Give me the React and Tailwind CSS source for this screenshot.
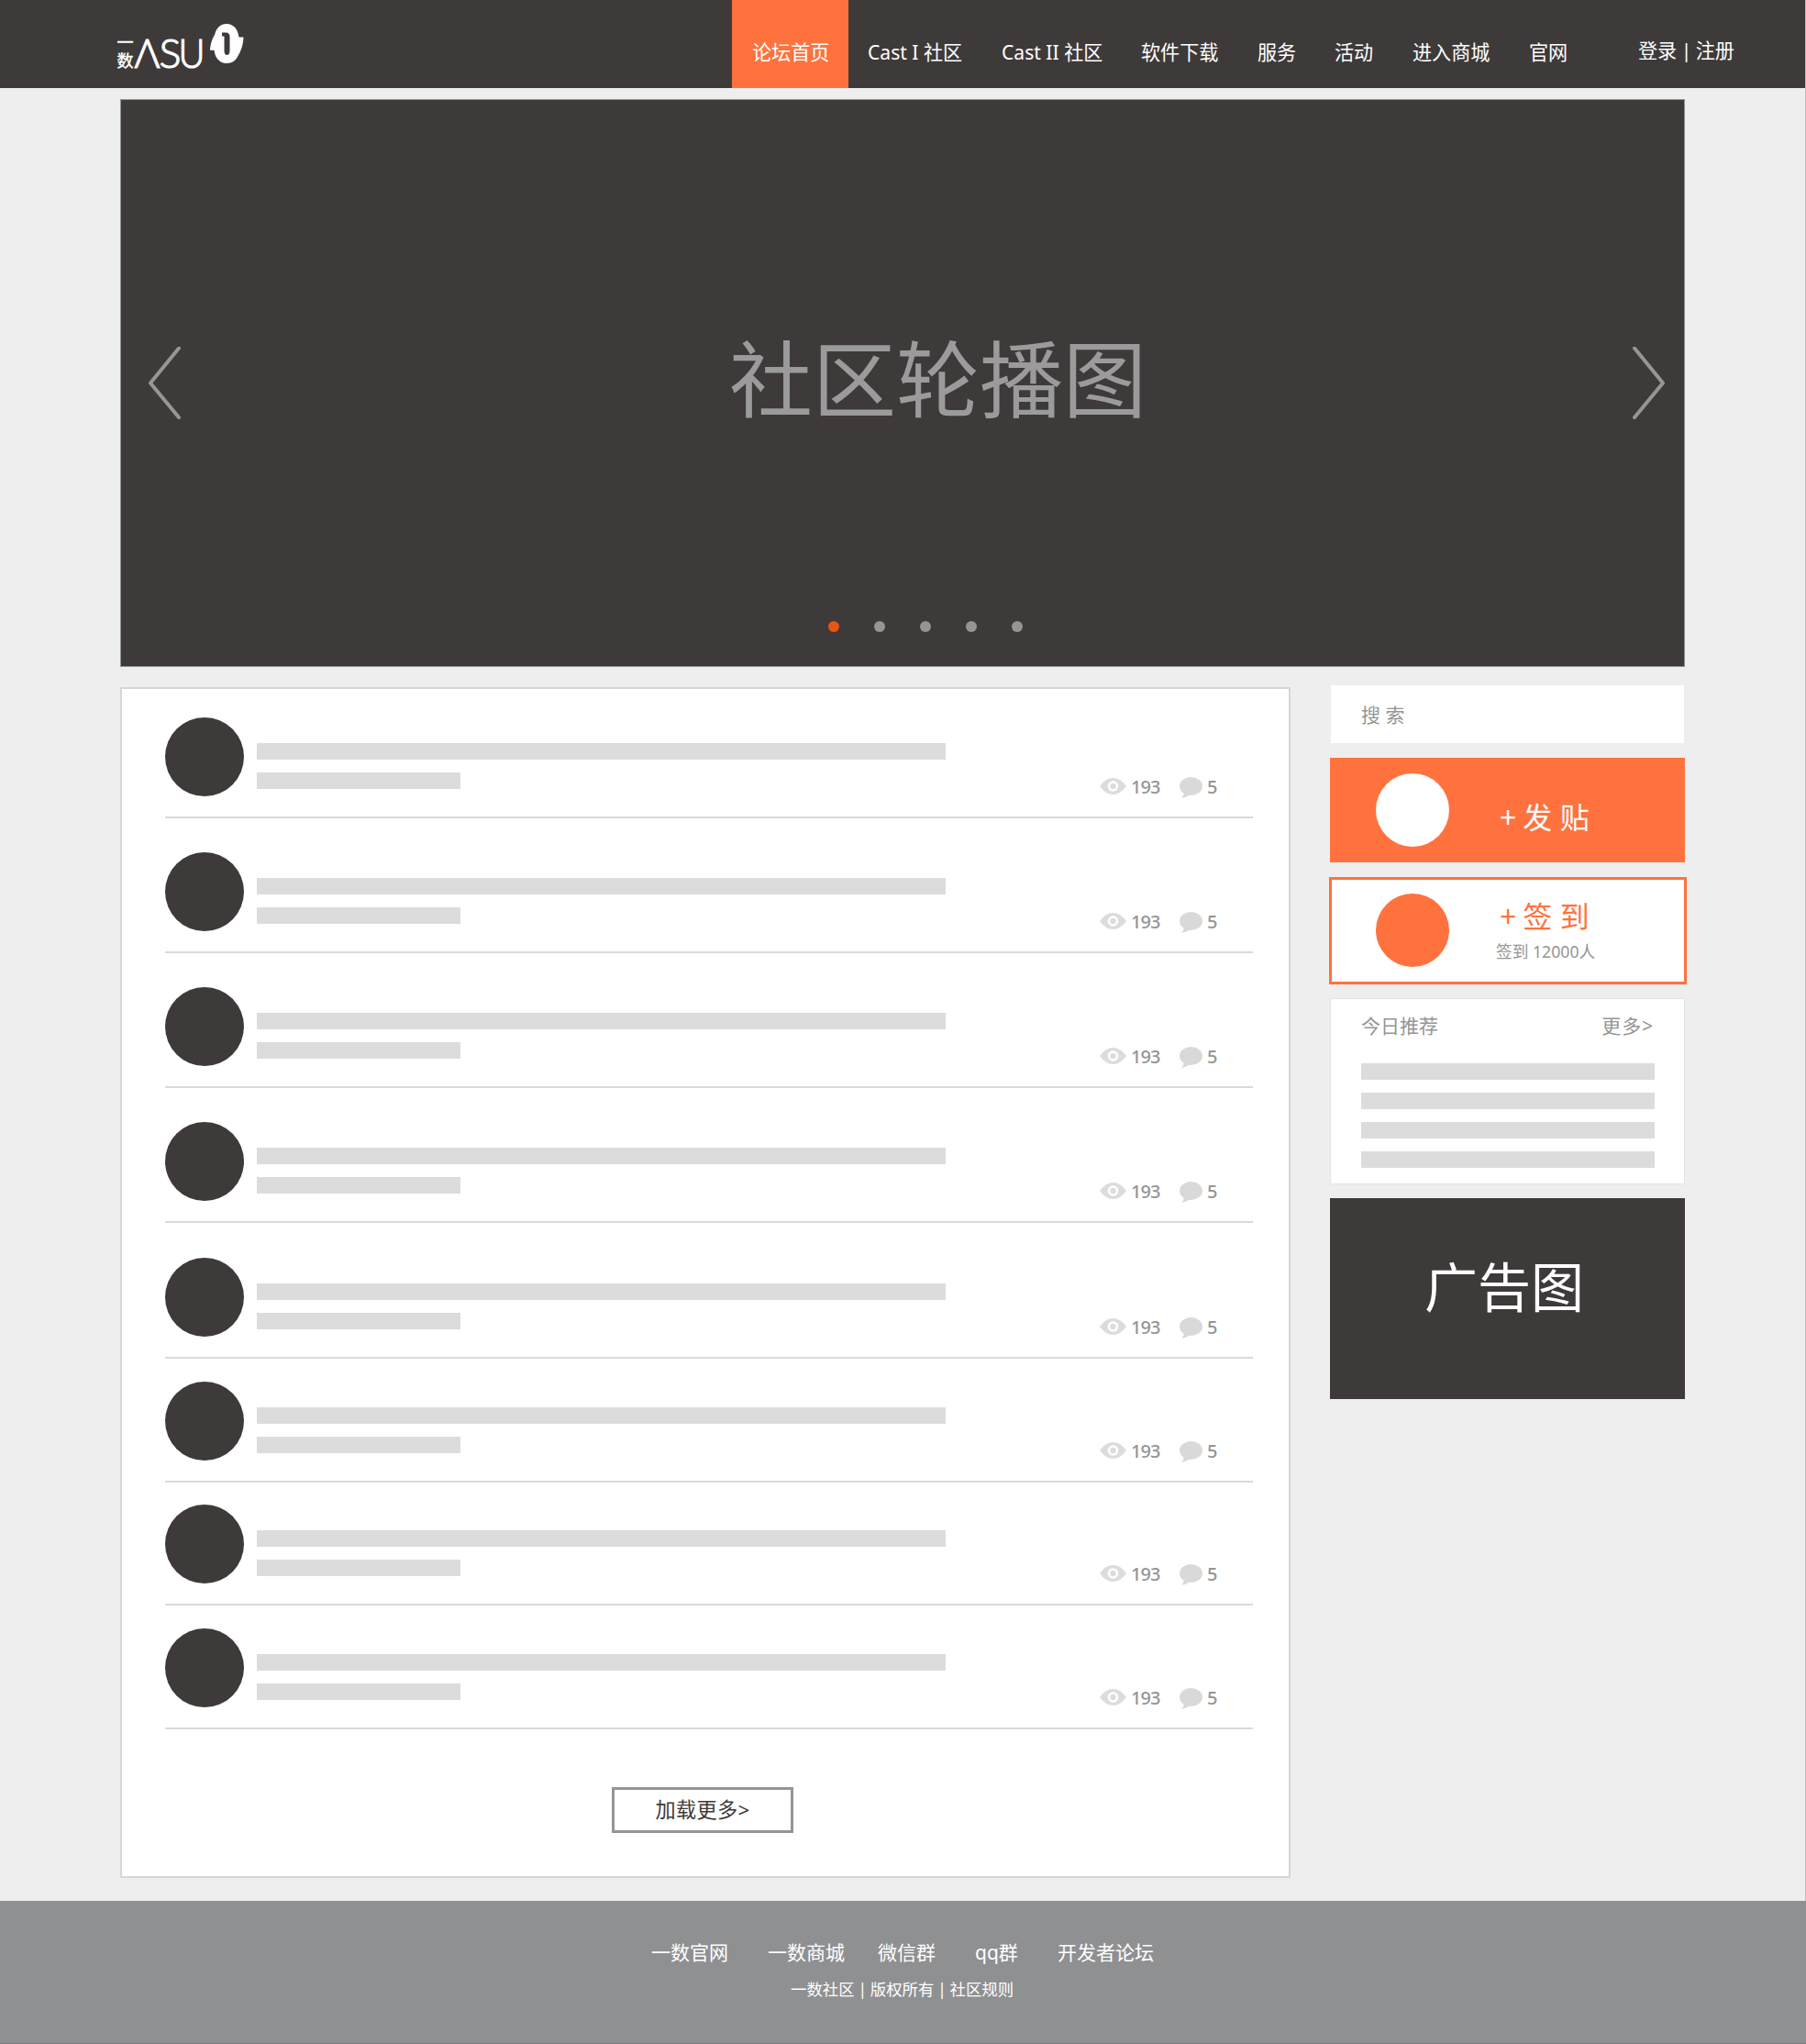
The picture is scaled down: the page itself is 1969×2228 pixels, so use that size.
import React from "react";

const navItems = [
  { label: "论坛首页", box: "w-[127px] pl-[22px] bg-[#ff723e]" },
  { label: "Cast I 社区", box: "w-[146px] pl-[21px]" },
  { label: "Cast II 社区", box: "w-[152px] pl-[21px]" },
  { label: "软件下载", box: "w-[127px] pl-[21px]" },
  { label: "服务", box: "w-[84px] pl-[21px]" },
  { label: "活动", box: "w-[85px] pl-[21px]" },
  { label: "进入商城", box: "w-[127px] pl-[21px]" },
  { label: "官网", box: "w-[84px] pl-[21px]" },
];

const posts = [
  "mt-[31px]",
  "mt-[37px]",
  "mt-[37px]",
  "mt-[37px]",
  "mt-[38px]",
  "mt-[25px]",
  "mt-[24px]",
  "mt-[25px]",
];

const footerLinks = [
  { label: "一数官网", box: "w-[127px]" },
  { label: "一数商城", box: "w-[120px]" },
  { label: "微信群", box: "w-[106px]" },
  { label: "qq群", box: "w-[90px]" },
  { label: "开发者论坛", box: "w-[106px]" },
];

function Logo() {
  return (
    <svg className="block h-[96px] w-[160px]" viewBox="120 0 160 96" fill="#fff">
      <g fontFamily="'Noto Sans CJK SC', sans-serif" fontSize="18" stroke="#fff" strokeWidth="0.4">
        <text x="127.500" y="52.500">一</text>
        <text x="127.500" y="73">数</text>
      </g>
      <g fontFamily="Lato, sans-serif" fontWeight="300" fontSize="44" stroke="#fff" strokeWidth="1.2">
        <text x="146.500" y="74" textLength="28" lengthAdjust="spacingAndGlyphs">Λ</text>
        <text x="173.500" y="74" textLength="24" lengthAdjust="spacingAndGlyphs">S</text>
        <text x="194.500" y="74" textLength="29" lengthAdjust="spacingAndGlyphs">U</text>
      </g>
      <path
        fillRule="evenodd"
        d="M247 26C254 26 259 31 260.500 40.500H265.500C265 51 261.500 57.500 260 60C257.500 66 253 69 247 69C239.500 69 234.500 63.500 233.500 54.800H229C229.500 47 231.500 42 234 38C236 30 240.500 26 247 26ZM242 35.500V39.500H244.500V55.500C244.500 61.500 250.500 61.500 250.500 55.500V40C250.500 37 249 35.500 246.500 35.500Z"
      />
    </svg>
  );
}

function Chevron({ flip }) {
  return (
    <svg
      className={flip ? "block h-[80px] w-[35px] -scale-x-100" : "block h-[80px] w-[35px]"}
      viewBox="0 0 35 80"
      fill="none"
      stroke="#959695"
      strokeWidth="4"
      strokeLinejoin="round"
      strokeLinecap="round"
    >
      <path d="M33 2L2 40L33 77.500" transform="translate(0 -0.500)" />
    </svg>
  );
}

function Stats() {
  return (
    <div className="ml-auto mt-[64px] mr-[38px] flex h-[24px] text-[20px] leading-[24px] font-medium tracking-[-1px] text-[#959595]">
      <svg className="mt-[2px] block h-[18px] w-[29px]" viewBox="0 0 29 18">
        <path d="M0 9Q6.500 0 14.500 0T29 9Q22.500 18 14.500 18T0 9Z" fill="#dcdcdc" />
        <circle cx="14.500" cy="9" r="4.500" fill="#dcdcdc" stroke="#fff" strokeWidth="2.600" />
      </svg>
      <span className="ml-[5px] w-[53px]">193</span>
      <svg className="mt-[1px] block h-[23px] w-[25px]" viewBox="0 0 25 23" fill="#d9d9d9">
        <ellipse cx="12.500" cy="10" rx="12.500" ry="10" />
        <path d="M5 16Q5 20 2 22.700Q8 22.500 12 18Z" />
      </svg>
      <span className="ml-[5px] w-[12px]">5</span>
    </div>
  );
}

function Post({ spacing }) {
  return (
    <div className={`${spacing} flex h-[110px] border-b-2 border-[#dadada]`}>
      <div className="size-[86px] rounded-full bg-[#3e3a39]" />
      <div className="ml-[14px] mt-[28px] w-[751px]">
        <div className="h-[18px] bg-[#dcdcdc]" />
        <div className="mt-[14px] h-[18px] w-[222px] bg-[#dcdcdc]" />
      </div>
      <Stats />
    </div>
  );
}

function Sidebar() {
  return (
    <aside className="-mt-[2px] w-[390px]">
      <div className="ml-[2px] h-[63px] w-[385px] bg-white pl-[33px] text-[21px] leading-[65px] text-[#959595]">
        搜 索
      </div>
      <div className="ml-[1px] mt-[16px] flex h-[114px] w-[387px] bg-[#ff723e] pl-[50px] pt-[17px]">
        <div className="size-[80px] rounded-full bg-white" />
        <div className="ml-[55px] mt-[24px] flex gap-[7px] text-[32px] leading-[48px] text-white">
          <span>+</span>
          <span>发 贴</span>
        </div>
      </div>
      <div className="mt-[16px] flex h-[117px] w-[390px] border-[3px] border-[#ff723e] bg-white pl-[48px] pt-[15px]">
        <div className="size-[80px] rounded-full bg-[#ff723e]" />
        <div className="ml-[51px] pt-[1px]">
          <div className="ml-[4px] flex gap-[7px] text-[32px] leading-[48px] text-[#ff723e]">
            <span>+</span>
            <span>签 到</span>
          </div>
          <div className="text-[17.7px] leading-[28px] whitespace-nowrap text-[#959595]">签到 12000人</div>
        </div>
      </div>
      <div className="ml-[1px] mt-[15px] h-[203px] w-[387px] border border-[#e4e4e4] bg-white pl-[33px] pr-[32px] pt-[16px]">
        <div className="flex justify-between text-[21px] leading-[26px] text-[#959595]">
          <span>今日推荐</span>
          <span className="mr-[1px] tracking-[0.9px]">更多&gt;</span>
        </div>
        <div className="mt-[28px] space-y-[14px]">
          <div className="h-[18px] bg-[#dcdcdc]" />
          <div className="h-[18px] bg-[#dcdcdc]" />
          <div className="h-[18px] bg-[#dcdcdc]" />
          <div className="h-[18px] bg-[#dcdcdc]" />
        </div>
      </div>
      <div className="ml-[1px] mt-[15px] h-[219px] w-[387px] bg-[#3e3a39] pl-[103px] pt-[55px] text-[58px] leading-[84px] text-white">
        广告图
      </div>
    </aside>
  );
}

export default function App() {
  return (
    <div className="flex h-[2228px] w-[1969px] flex-col border-r border-[#bdbdbd] bg-[#eee] font-['Noto_Sans','Noto_Sans_CJK_SC',sans-serif]">
      <header className="flex h-[96px] shrink-0 bg-[#3e3a39] text-[21.1px] whitespace-nowrap text-white">
        <div className="w-[798px] pl-[120px]">
          <Logo />
        </div>
        <nav className="flex">
          {navItems.map((item) => (
            <a key={item.label} className={`block h-[96px] pt-[41px] leading-[32px] ${item.box}`}>
              {item.label}
            </a>
          ))}
        </nav>
        <div className="ml-[56px] pt-[39px] leading-[32px] [word-spacing:-1px]">登录 | 注册</div>
      </header>

      <section className="ml-[131px] mt-[12px] flex h-[619px] w-[1706px] shrink-0 flex-col border border-[#8f9291] bg-[#3e3a39]">
        <div className="flex h-[540px] justify-between pl-[30px] pr-[21px] pt-[269px]">
          <Chevron />
          <div className="ml-[68px] -mt-[15px] h-[100px] text-[91px] leading-[100px] text-[#9b9b9c]">社区轮播图</div>
          <Chevron flip />
        </div>
        <div className="ml-[771px] mt-[28px] flex gap-[38px]">
          <i className="size-[12px] rounded-full bg-[#ea5514]" />
          <i className="size-[12px] rounded-full bg-[#959595]" />
          <i className="size-[12px] rounded-full bg-[#959595]" />
          <i className="size-[12px] rounded-full bg-[#959595]" />
          <i className="size-[12px] rounded-full bg-[#959595]" />
        </div>
      </section>

      <main className="ml-[131px] mt-[22px] flex shrink-0 gap-[42px]">
        <section className="h-[1298px] w-[1276px] border-2 border-[#d6d6d6] bg-white pl-[47px] pr-[39px]">
          {posts.map((spacing, i) => (
            <Post key={i} spacing={spacing} />
          ))}
          <button className="ml-[487px] mt-[63px] block h-[50px] w-[198px] border-[3px] border-[#959595] text-[22.2px] leading-[42px] tracking-[0.3px] text-[#3e3a39]">
            加载更多&gt;
          </button>
        </section>
        <Sidebar />
      </main>

      <footer className="mt-auto h-[156px] w-[1969px] shrink-0 border-b border-[#77787a] bg-[#8f9092] whitespace-nowrap text-white">
        <div className="flex pl-[710px] pt-[40px] text-[21px] leading-[32px]">
          {footerLinks.map((link) => (
            <a key={link.label} className={link.box}>
              {link.label}
            </a>
          ))}
        </div>
        <div className="mt-[11px] pl-[862px] text-[17.4px] leading-[26px] [word-spacing:-0.7px]">一数社区 | 版权所有 | 社区规则</div>
      </footer>
    </div>
  );
}
